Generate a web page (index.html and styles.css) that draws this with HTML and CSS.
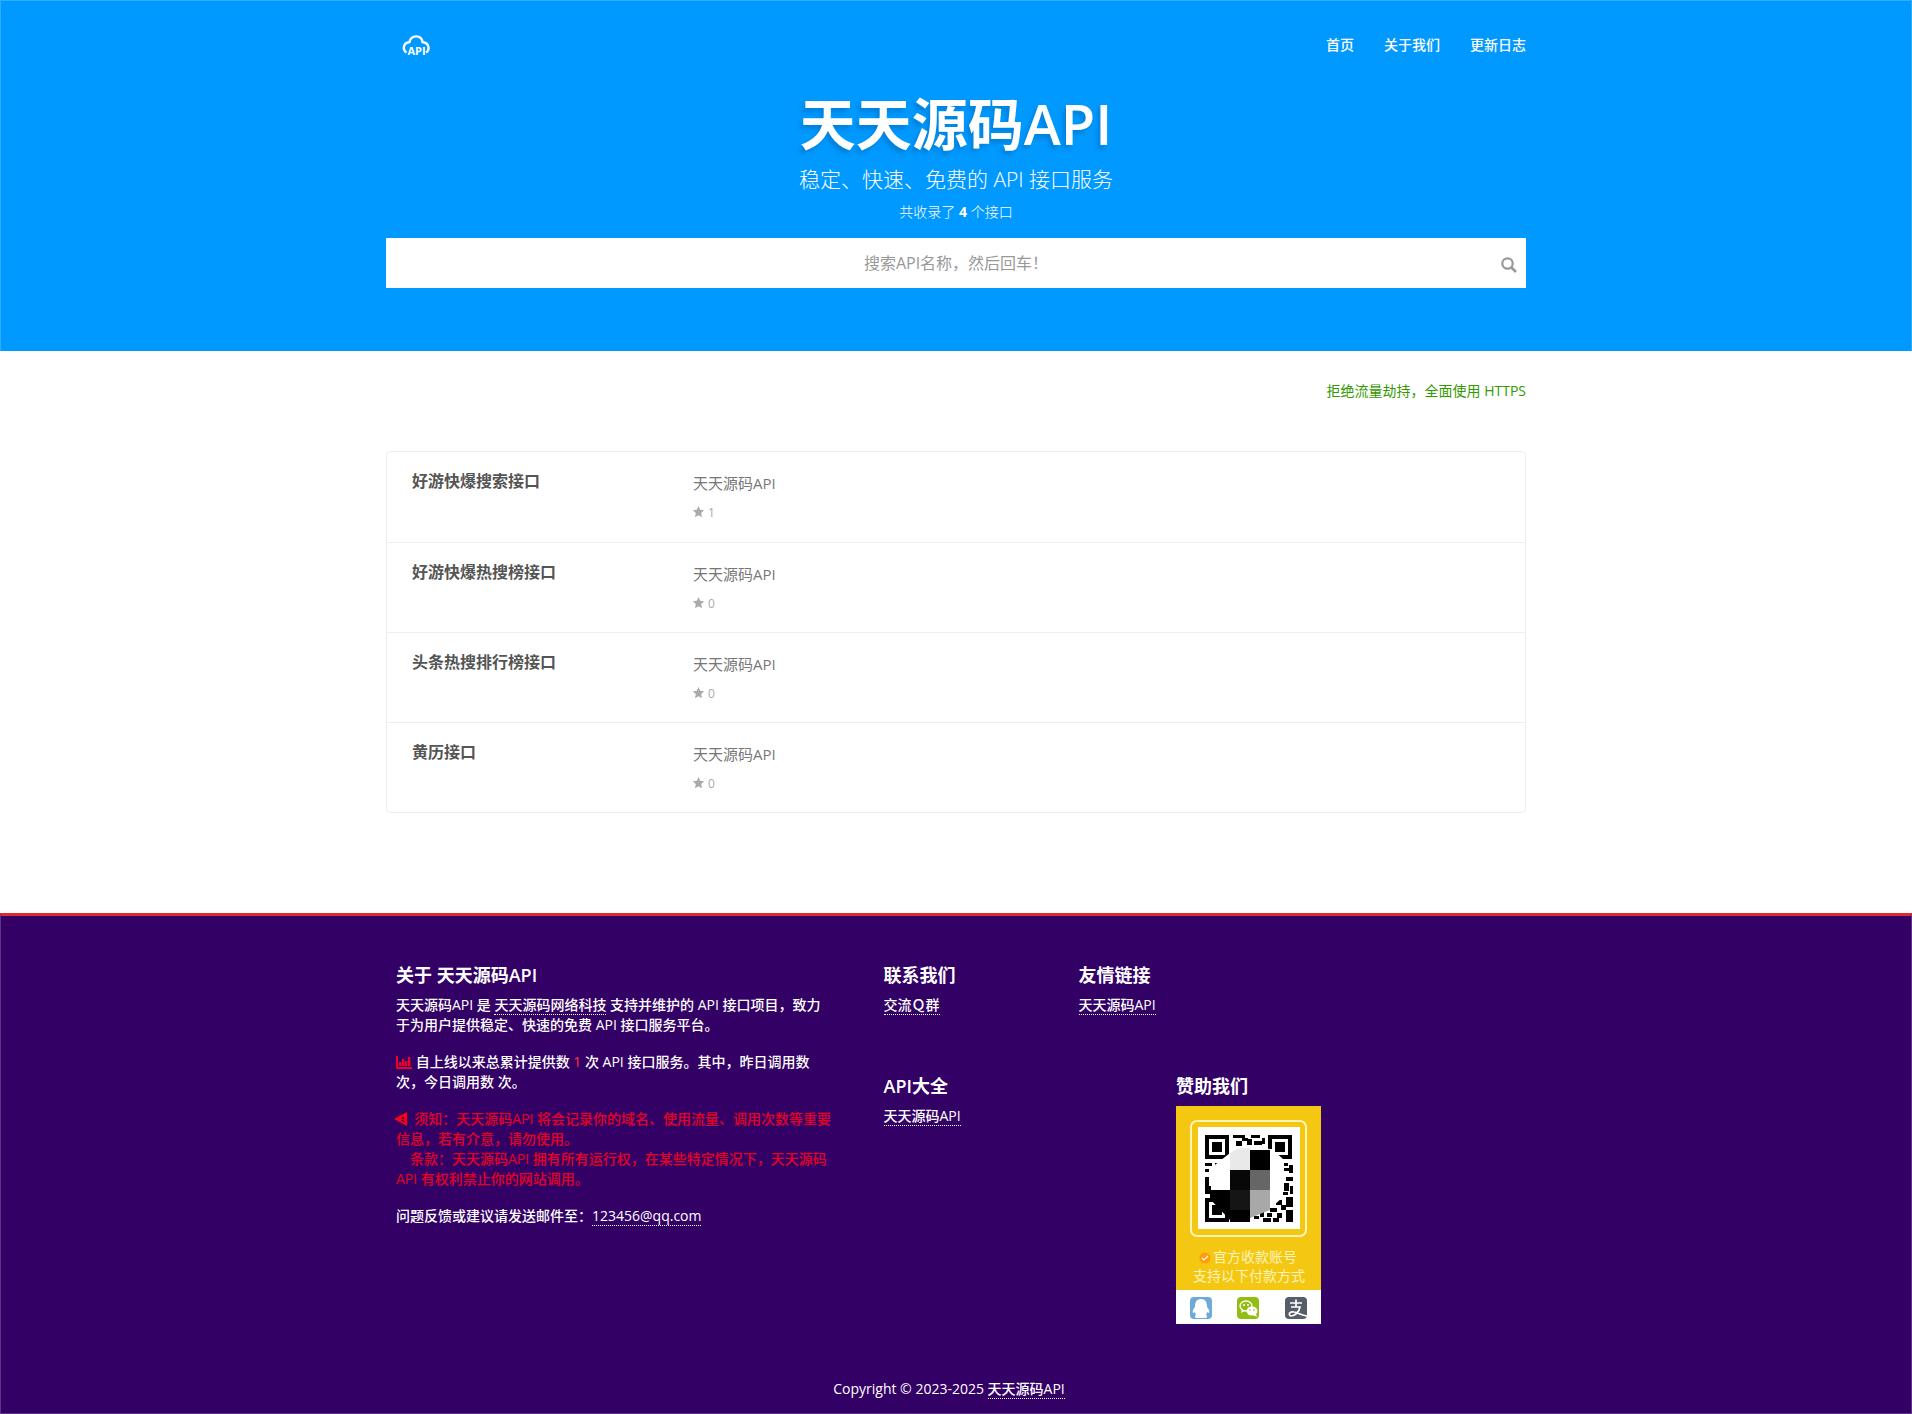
FILE: index.html
```html
<!DOCTYPE html>
<html lang="zh-CN">
<head>
    <meta charset="UTF-8">
    <meta name="viewport" content="width=device-width, initial-scale=1.0">
    <title>天天源码API</title>
    <link rel="stylesheet" href="styles.css">
</head>
<body>
    <header class="header">
        <div class="container">
            <nav class="nav">
                <a class="logo" href="#" aria-label="API">
                    <svg width="28" height="22" viewBox="0 0 28 22">
                        <path d="M4.500 18.500C.5 16 .7 9 7.500 8C9 .5 19.500 .5 20.500 8C27.500 9 28 16 24 18.500" fill="none" stroke="#fff" stroke-width="2.400"/>
                        <text x="14.500" y="20.500" text-anchor="middle" class="logo-text">API</text>
                    </svg>
                </a>
                <ul class="menu">
                    <li><a href="#">首页</a></li>
                    <li><a href="#">关于我们</a></li>
                    <li><a href="#">更新日志</a></li>
                </ul>
            </nav>
            <h1>天天源码API</h1>
            <p class="slogan">稳定、快速、免费的 API 接口服务</p>
            <p class="count">共收录了 <strong>4</strong> 个接口</p>
            <form class="search">
                <input type="text" aria-label="搜索API" placeholder="搜索API名称，然后回车！">
                <button type="button" aria-label="搜索">
                    <svg width="16" height="16" viewBox="0 0 16 16">
                        <circle cx="6.500" cy="6.500" r="5.200" fill="none" stroke="#999" stroke-width="2.200"/>
                        <path d="M10.500 10.500L15 15" stroke="#999" stroke-width="2.600"/>
                    </svg>
                </button>
            </form>
        </div>
    </header>

    <main class="container">
        <p class="notice">拒绝流量劫持，全面使用 HTTPS</p>
        <ul class="api-list">
            <li>
                <a class="api-name" href="#">好游快爆搜索接口</a>
                <div>
                    <p class="api-desc">天天源码API</p>
                    <p class="api-star"><svg width="12" height="12" viewBox="0 0 12 12"><use href="#star"/></svg> 1</p>
                </div>
            </li>
            <li>
                <a class="api-name" href="#">好游快爆热搜榜接口</a>
                <div>
                    <p class="api-desc">天天源码API</p>
                    <p class="api-star"><svg width="12" height="12" viewBox="0 0 12 12"><use href="#star"/></svg> 0</p>
                </div>
            </li>
            <li>
                <a class="api-name" href="#">头条热搜排行榜接口</a>
                <div>
                    <p class="api-desc">天天源码API</p>
                    <p class="api-star"><svg width="12" height="12" viewBox="0 0 12 12"><use href="#star"/></svg> 0</p>
                </div>
            </li>
            <li>
                <a class="api-name" href="#">黄历接口</a>
                <div>
                    <p class="api-desc">天天源码API</p>
                    <p class="api-star"><svg width="12" height="12" viewBox="0 0 12 12"><use href="#star"/></svg> 0</p>
                </div>
            </li>
        </ul>
    </main>

    <footer class="footer">
        <div class="footer-grid">
            <section class="about">
                <h3>关于 天天源码API</h3>
                <p>天天源码API 是 <a href="#">天天源码网络科技</a> 支持并维护的 API 接口项目，致力于为用户提供稳定、快速的免费 API 接口服务平台。</p>
                <p><svg class="icon-chart" width="16" height="13" viewBox="0 0 16 13"><path d="M0 0h2v11h14v2H0zM3 6h2.400v4H3zM6 3h2.400v7H6zM9 5h2.400v5H9zM12 1h2.400v9H12z" fill="#f00028"/></svg> 自上线以来总累计提供数 <span class="num">1</span> 次 API 接口服务。其中，昨日调用数 次，今日调用数 次。</p>
                <p class="warn"><svg class="icon-horn" width="13" height="14" viewBox="0 0 13 14"><path d="M0 7L13 0V14z" fill="#ff0010"/><path d="M8 5l2 2M7.500 8l3 2" stroke="#330066" stroke-width="1.200"/></svg>&nbsp; 须知：天天源码API 将会记录你的域名、使用流量、调用次数等重要信息，若有介意，请勿使用。<br>&emsp;条款：天天源码API 拥有所有运行权，在某些特定情况下，天天源码API 有权利禁止你的网站调用。</p>
                <p>问题反馈或建议请发送邮件至：<a href="#">123456@qq.com</a></p>
            </section>
            <section class="contact">
                <h3>联系我们</h3>
                <a href="#">交流Ｑ群</a>
            </section>
            <section class="links">
                <h3>友情链接</h3>
                <a href="#">天天源码API</a>
            </section>
            <section class="apis">
                <h3>API大全</h3>
                <a href="#">天天源码API</a>
            </section>
            <section class="sponsor">
                <h3>赞助我们</h3>
                <svg class="pay" viewBox="0 0 145 218" role="img" aria-label="收款码">
                    <rect width="145" height="184" fill="#f4c812"/>
                    <rect y="184" width="145" height="34" fill="#fff"/>
                    <rect x="15" y="15" width="115" height="115" rx="6" fill="none" stroke="#fff3b8" stroke-width="2"/>
                    <rect x="22" y="21" width="102" height="102" fill="#fff"/>
                    <!-- finder patterns -->
                    <g fill="none" stroke="#000" stroke-width="4">
                        <path d="M31 31h20v20H31zM94 31h20v20H94zM31 94h20v20H31z"/>
                    </g>
                    <path d="M36 36h10v10H36zM99 36h10v10H99zM36 99h10v10H36z"/>
                    <!-- modules -->
                    <path d="M57 29h12v3H57zM66 32h6v3h-6zM60 35h6v5h-6zM75 29h9v3h-9zM71 33h5v6h-5zM78 35h8v4h-8zM86 32h3v6h-3zM29 57h7v3h-7zM39 57h6v3h-6zM29 63h4v3h-4zM29 71h4v17h-4zM33 80h4v8h-4zM108 57h4v3h-4zM113 59h4v8h-4zM108 62h6v3h-6zM110 71h7v4h-7zM108 77h5v8h-5zM114 80h3v8h-3zM105 86h7v3h-7zM110 91h7v10h-7zM100 94h6v5h-6zM105 99h5v5h-5zM94 102h7v4h-7zM110 104h7v12h-7zM101 107h5v5h-5zM91 107h5v4h-5zM84 106h4v5h-4zM87 112h8v4h-8zM97 112h6v4h-6zM78 110h5v3h-5z"/>
                    <path d="M54 47Q62 41 72 42L96 43L107 53V91L96 101L80 107L64 116H56L35 92V62z" fill="#fff"/>
                    <path d="M54 47Q62 41 74 42V64H54z" fill="#e9e9e9"/>
                    <path d="M74 44h20v20H74z"/>
                    <path d="M54 64h20v20H54z" fill="#080808"/>
                    <path d="M74 64h20v20H74z" fill="#666"/>
                    <path d="M34 84h20v30L34 93z"/>
                    <path d="M54 84h20v20H54z" fill="#151515"/>
                    <path d="M54 104h20v12H54z"/>
                    <path d="M74 84h20v20l-20 8z" fill="#a8a8a8"/>
                    <circle cx="29" cy="152" r="5.500" fill="#ff9d0a"/>
                    <path d="M26 152l2 2 4-4" fill="none" stroke="#fff" stroke-width="1.200"/>
                    <text x="37" y="156" class="pay-text">官方收款账号</text>
                    <text x="17" y="175" class="pay-text">支持以下付款方式</text>
                    <!-- QQ -->
                    <rect x="14" y="191" width="22" height="22" rx="4" fill="#6ea9dc"/>
                    <path d="M25 193c-5 0-6 4-6 8-2 2-3 5-2 6 1 0 1-1 2-1 0 2 1 2 1 3-2 1-1 3 1 3h8c2 0 3-2 1-3 0-1 1-1 1-3 1 0 1 1 2 1 1-1 0-4-2-6 0-4-1-8-6-8z" fill="#fff"/>
                    <!-- WeChat -->
                    <rect x="61" y="191" width="22" height="22" rx="4" fill="#94bd13"/>
                    <ellipse cx="70" cy="200" rx="6" ry="5" fill="none" stroke="#fff" stroke-width="1.300"/>
                    <path d="M66 203l-1 4 4-2z" fill="#fff"/>
                    <ellipse cx="76" cy="205" rx="5.500" ry="4.500" fill="#fff"/>
                    <path d="M80 208l1 3-4-2z" fill="#fff"/>
                    <g fill="#fff"><circle cx="68" cy="199" r="1"/><circle cx="72" cy="199" r="1"/></g>
                    <g fill="#94bd13"><circle cx="74" cy="204" r=".8"/><circle cx="78" cy="204" r=".8"/></g>
                    <!-- Alipay -->
                    <rect x="109" y="191" width="22" height="22" rx="4" fill="#555e69"/>
                    <path d="M114 197h12M120 193.500v7.500M115 201h9c-1 5-5 9-9 9-3-1-2-5 3-4 4 .5 7 3 13 4" fill="none" stroke="#fff" stroke-width="1.700"/>
                </svg>
            </section>
        </div>
        <p class="copyright">Copyright © 2023-2025 <a href="#">天天源码API</a></p>
    </footer>

    <svg class="defs" width="0" height="0" aria-hidden="true">
        <symbol id="star" viewBox="0 0 12 12"><path d="M5.500 0l1.700 3.700 4 .5-3 2.800.8 4.200-3.500-2-3.500 2 .8-4.200-3-2.800 4-.5z" fill="#aaa"/></symbol>
    </svg>
</body>
</html>
```
FILE: styles.css
```css
* {
    box-sizing: border-box;
}
body {
    margin: 0;
    font-family: "Open Sans", "Noto Sans CJK SC", sans-serif;
    font-size: 14px;
    line-height: 20px;
    color: #555;
    background: #fff;
}
h1, h3, p, ul {
    margin: 0;
    padding: 0;
}
ul {
    list-style: none;
}
a {
    color: inherit;
    text-decoration: none;
}
.container {
    max-width: 1140px;
    margin: 0 auto;
}
.header {
    padding-bottom: 63px;
    border: 1px solid #33adff;
    border-bottom: 0;
    background: #0099ff;
    color: #fff;
    text-align: center;
}
.nav {
    display: flex;
    justify-content: space-between;
    align-items: center;
    height: 88px;
    padding-left: 16px;
}
.logo svg {
    display: block;
}
.logo-text {
    font: bold 11px "Open Sans", sans-serif;
    fill: #fff;
}
.menu {
    display: flex;
    gap: 30px;
    font-weight: 500;
}
h1 {
    font-size: 56px;
    line-height: 68px;
    font-weight: 600;
    text-shadow: -3px 4px 4px rgba(0, 60, 120, 0.25);
}
.slogan {
    padding-top: 6px;
    font-size: 21px;
    line-height: 32px;
    font-weight: 300;
}
.count {
    padding: 7px 0 16px;
    font-weight: 300;
}
.count strong {
    font-weight: 700;
}
.search {
    position: relative;
}
.search input {
    display: block;
    width: 100%;
    height: 50px;
    padding: 0 40px;
    border: 0;
    background: #fff;
    font-family: inherit;
    font-size: 16px;
    text-align: center;
}
.search input::placeholder {
    color: #999;
}
.search button {
    position: absolute;
    top: 0;
    right: 0;
    display: flex;
    align-items: center;
    height: 100%;
    padding: 4px 9px 0;
    border: 0;
    background: none;
}
.notice {
    padding-top: 30px;
    color: #339900;
    text-align: right;
}
.api-list {
    margin: 50px 0 100px;
    border: 1px solid #eee;
    border-radius: 4px;
}
.api-list li {
    display: grid;
    grid-template-columns: 281px 1fr;
    padding: 19px 25px 18px;
    border-bottom: 1px solid #eee;
}
.api-list li:last-child {
    border-bottom: 0;
}
.api-list li:first-child {
    padding-bottom: 19px;
}
.api-name {
    font-size: 16px;
    font-weight: 700;
}
.api-desc {
    padding-top: 2px;
    font-size: 15px;
    color: #777;
}
.api-star {
    padding-top: 10px;
    font-size: 12px;
    color: #aaa;
}
.api-star svg {
    vertical-align: -1px;
}
.footer {
    padding: 45px 0 14px;
    border: 1px solid #5c3385;
    border-top: 3px solid #dc2a2f;
    background: #330066;
    color: #fff;
    font-weight: 500;
}
.footer-grid {
    display: grid;
    grid-template-columns: repeat(12, 1fr);
    grid-template-rows: 111px auto;
    max-width: 1170px;
    margin: 0 auto;
}
.footer section {
    padding: 0 25px;
}
.footer h3 {
    padding-bottom: 6px;
    font-size: 18px;
    line-height: 28px;
    font-weight: 600;
}
.footer a {
    border-bottom: 1px dotted #fff;
}
.about {
    grid-column: span 5;
    grid-row: span 2;
}
.about p {
    margin-bottom: 17px;
}
.contact {
    grid-column: span 2;
}
.links {
    grid-column: span 5;
}
.apis {
    grid-column: span 3;
}
.sponsor {
    grid-column: span 2;
}
.icon-chart {
    vertical-align: -2px;
}
.icon-horn {
    margin-left: -2px;
    vertical-align: -2px;
}
.num {
    color: #ff3333;
}
.warn {
    color: #e60023;
}
.pay {
    display: block;
    width: 100%;
}
.pay-text {
    font: 14px "Noto Sans CJK SC", sans-serif;
    fill: #fff3b8;
}
.copyright {
    padding: 55px 14px 0 0;
    text-align: center;
}
.defs {
    display: none;
}
```
